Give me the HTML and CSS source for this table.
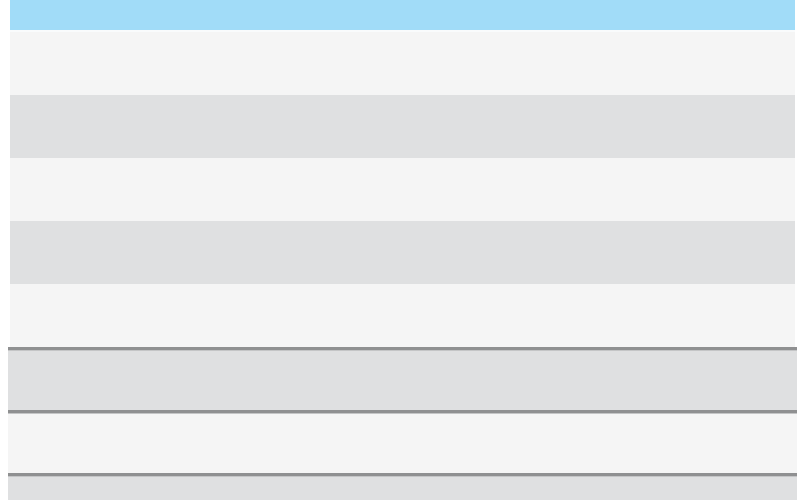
FILE: index.html
```html
<!DOCTYPE html>
<html lang="en">
<head>
  <meta charset="UTF-8">
  <title>List</title>
  <link rel="stylesheet" href="styles.css">
</head>
<body>
  <div class="list">
    <div class="list-header"></div>
    <div class="row light"></div>
    <div class="row dark"></div>
    <div class="row light"></div>
    <div class="row dark"></div>
    <div class="row light"></div>
    <div class="row dark ruled"></div>
    <div class="row light ruled"></div>
    <div class="row dark ruled"></div>
  </div>
</body>
</html>
```

FILE: styles.css
```css
* { box-sizing: border-box; }

body {
  margin: 0;
  padding: 0 5px 0 10px;
  background: #ffffff;
  font-family: "Liberation Sans", sans-serif;
  overflow: hidden;
}

.list {
  width: 785px;
}

.list-header {
  height: 32px;
  background: #a1dcf8;
  border-bottom: 2px solid #f9fbfc;
}

.row {
  height: 63px;
}

.light { background: #f5f5f5; }
.dark { background: #dfe0e1; }

.ruled {
  height: 63px;
  margin-left: -2px;
  margin-right: -2px;
  border-top: 3px solid #8f9091;
  box-shadow: inset 0 1px 0 #c4c5c6;
}
```
